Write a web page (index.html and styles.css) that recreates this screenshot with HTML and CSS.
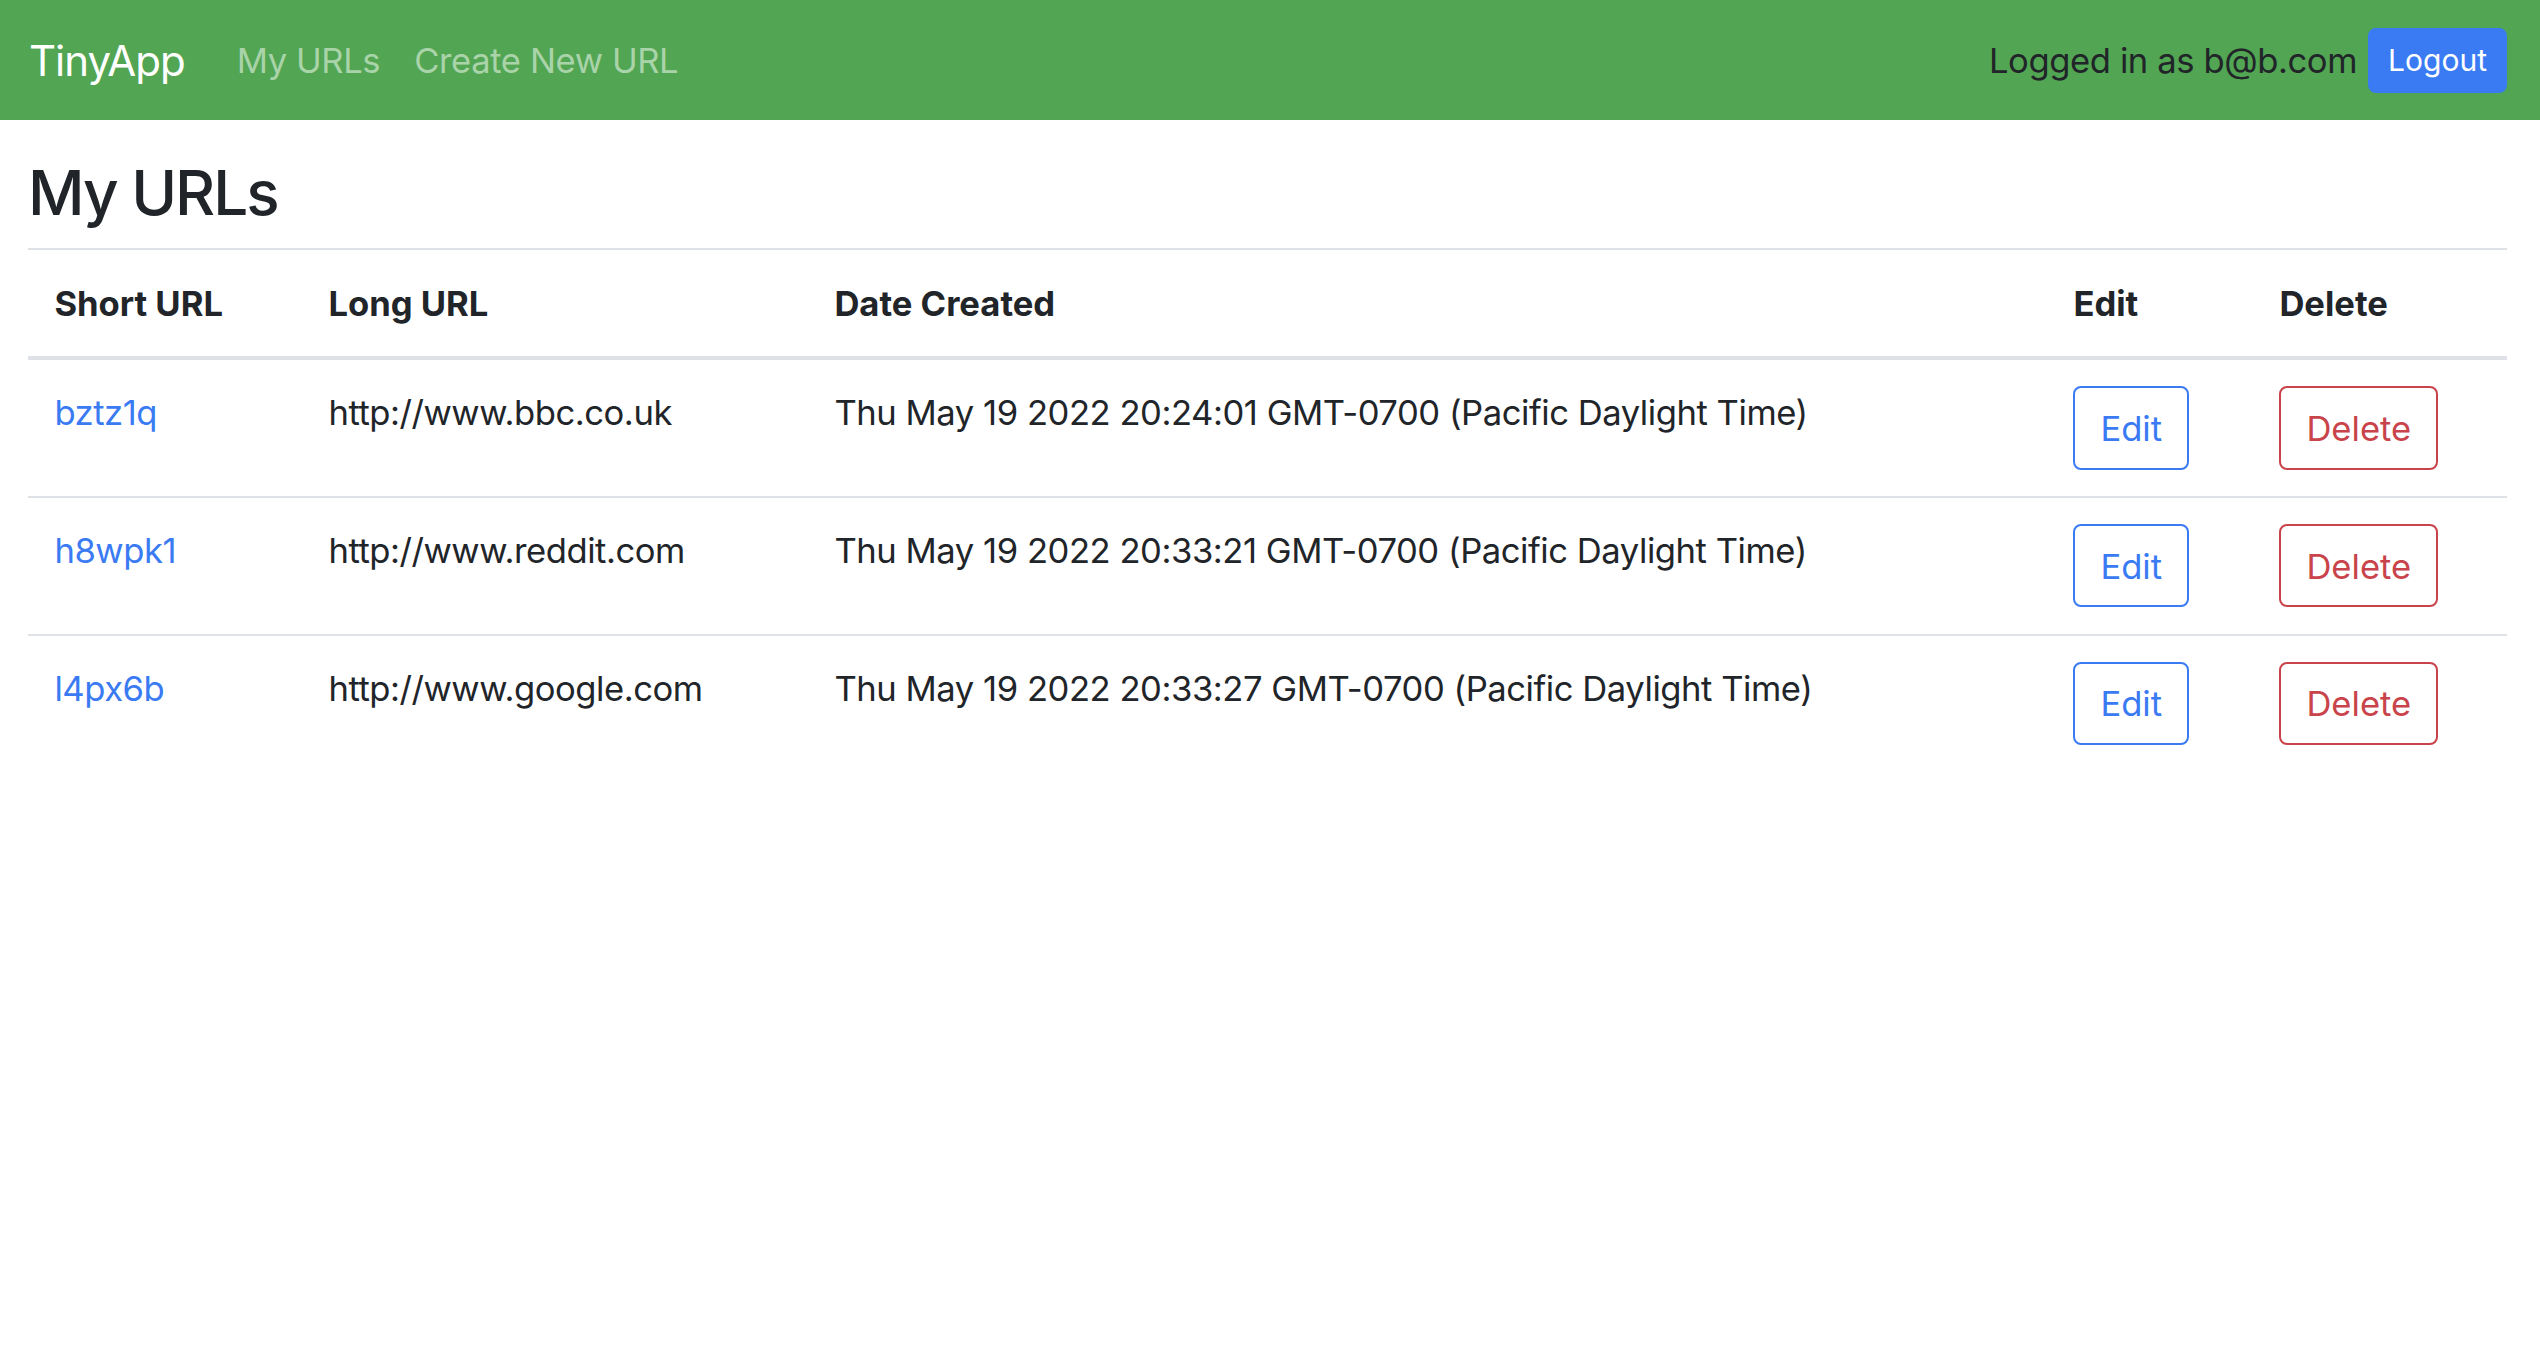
FILE: index.html
```html
<!DOCTYPE html>
<html lang="en">
<head>
<meta charset="utf-8">
<title>TinyApp</title>
<link rel="stylesheet" href="styles.css">
</head>
<body>
<nav class="navbar">
  <a class="brand" href="#">TinyApp</a>
  <ul class="nav-links">
    <li><a class="nav-link" href="#">My URLs</a></li>
    <li><a class="nav-link" href="#">Create New URL</a></li>
  </ul>
  <div class="user">
    <span class="user-text">Logged in as b@b.com</span>
    <button class="btn-sm btn-primary" type="button">Logout</button>
  </div>
</nav>
<main class="container">
  <h1 class="title">My URLs</h1>
  <table class="table">
    <thead>
      <tr>
        <th class="col-short">Short URL</th>
        <th class="col-long">Long URL</th>
        <th class="col-date">Date Created</th>
        <th class="col-edit">Edit</th>
        <th class="col-del">Delete</th>
      </tr>
    </thead>
    <tbody>
      <tr>
        <td><a class="link" href="#">bztz1q</a></td>
        <td>http://www.bbc.co.uk</td>
        <td>Thu May 19 2022 20:24:01 GMT-0700 (Pacific Daylight Time)</td>
        <td><button class="btn btn-outline-primary" type="button">Edit</button></td>
        <td><button class="btn btn-outline-danger" type="button">Delete</button></td>
      </tr>
      <tr>
        <td><a class="link" href="#">h8wpk1</a></td>
        <td>http://www.reddit.com</td>
        <td>Thu May 19 2022 20:33:21 GMT-0700 (Pacific Daylight Time)</td>
        <td><button class="btn btn-outline-primary" type="button">Edit</button></td>
        <td><button class="btn btn-outline-danger" type="button">Delete</button></td>
      </tr>
      <tr>
        <td><a class="link" href="#">l4px6b</a></td>
        <td>http://www.google.com</td>
        <td>Thu May 19 2022 20:33:27 GMT-0700 (Pacific Daylight Time)</td>
        <td><button class="btn btn-outline-primary" type="button">Edit</button></td>
        <td><button class="btn btn-outline-danger" type="button">Delete</button></td>
      </tr>
    </tbody>
  </table>
</main>
</body>
</html>
```

FILE: styles.css
```css
* { box-sizing: border-box; }

html, body {
  margin: 0;
  padding: 0;
  background: #ffffff;
}

body {
  font-family: Inter, "Liberation Sans", sans-serif;
  font-size: 34.6px;
  line-height: 52.8px;
  color: #212529;
}

.navbar {
  display: flex;
  align-items: center;
  height: 120px;
  padding: 0 33px 0 29px;
  background: #52a552;
}

.brand {
  font-size: 42px;
  line-height: 1.5;
  letter-spacing: -1px;
  color: #ffffff;
  text-decoration: none;
  margin-right: 35px;
}

.nav-links {
  display: flex;
  list-style: none;
  margin: 0;
  padding: 0;
}

.nav-link {
  display: block;
  padding: 0 17px;
  color: #a9d3a9;
  letter-spacing: -0.4px;
  text-decoration: none;
}

.user {
  margin-left: auto;
  display: flex;
  align-items: center;
}

.user-text {
  color: #212529;
  letter-spacing: -0.4px;
  margin-right: 11px;
}

.btn-sm {
  font-family: inherit;
  font-size: 30px;
  line-height: 1.5;
  padding: 8px 18px;
  border: 2px solid transparent;
  border-radius: 8px;
  cursor: pointer;
}

.btn-primary {
  background: #3a7bf4;
  border-color: #3a7bf4;
  color: #ffffff;
}

.container {
  padding: 36px 33px 0 28px;
}

.title {
  margin: 0 0 18px;
  font-size: 62px;
  line-height: 1.2;
  font-weight: 500;
  letter-spacing: -2px;
}

.table {
  width: 100%;
  border-collapse: collapse;
}

.table th,
.table td {
  text-align: left;
  vertical-align: top;
  padding: 26.4px;
  border-top: 2px solid #dee2e6;
}

.table td {
  letter-spacing: -0.45px;
}

.table th {
  font-weight: 700;
}

.table thead th {
  border-bottom: 4px solid #dee2e6;
}

.col-short { width: 274px; }
.col-long { width: 506px; }
.col-date { width: 1239px; }
.col-edit { width: 206px; }
.col-del { width: 254px; }

.link {
  color: #3a7bf4;
  text-decoration: none;
}

.btn {
  font-family: inherit;
  font-size: 34.6px;
  line-height: 52.8px;
  letter-spacing: 0;
  padding: 13.2px 25px;
  background: transparent;
  border: 2px solid;
  border-radius: 8px;
  cursor: pointer;
}

.btn-outline-primary {
  color: #3a7bf4;
  border-color: #3a7bf4;
}

.btn-outline-danger {
  color: #c9434a;
  border-color: #c9434a;
}
```
